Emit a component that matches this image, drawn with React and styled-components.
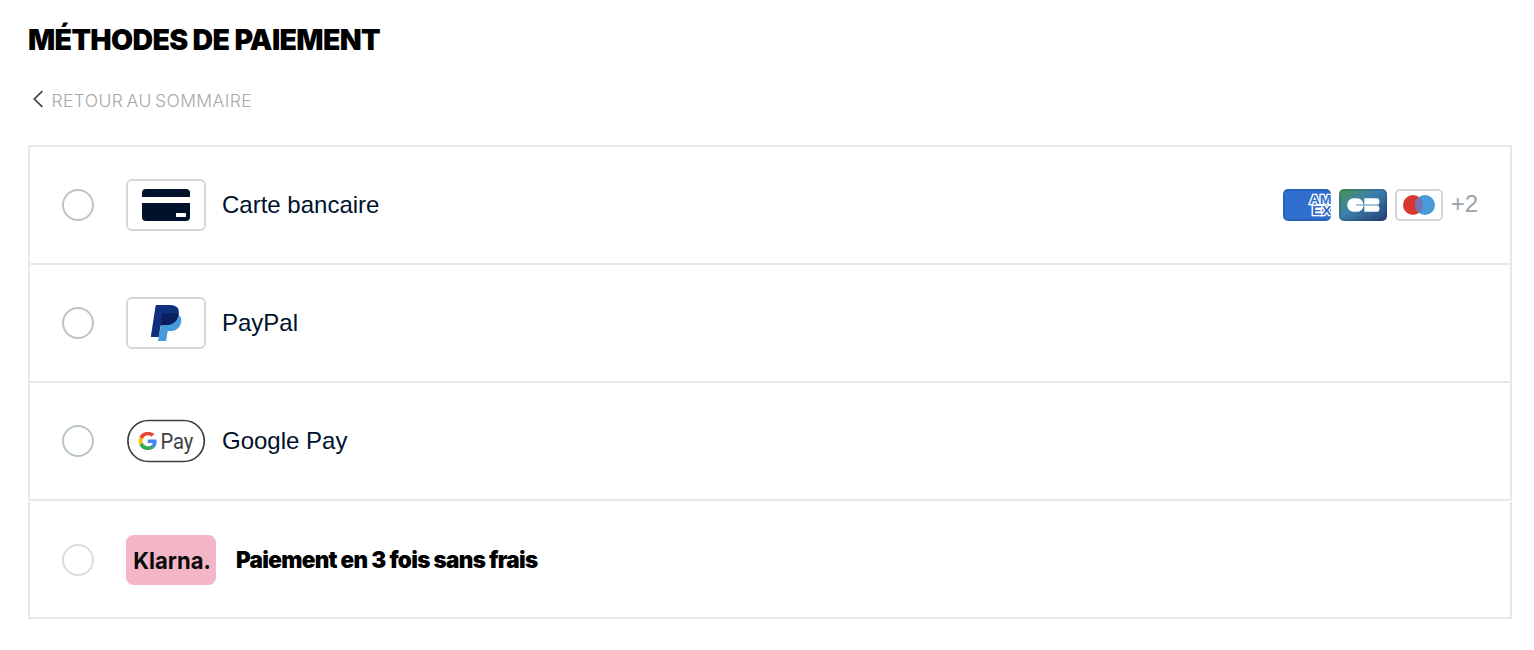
import React from "react";
import styled, { createGlobalStyle } from "styled-components";

const ink = "#00112c";
const line = "#e8e8e8";

const methods = [
  { id: "card", name: "Carte bancaire", logo: <CardLogo />, brands: true },
  { id: "paypal", name: "PayPal", logo: <PaypalLogo /> },
  { id: "gpay", name: "Google Pay", logo: <GooglePayLogo /> },
];

function CardLogo() {
  return (
    <LogoFrame>
      <svg width="48" height="32" viewBox="0 0 48 32">
        <path
          fill={ink}
          d="M4 0h40a4 4 0 0 1 4 4v4H0V4a4 4 0 0 1 4-4zM0 14h48v14a4 4 0 0 1-4 4H4a4 4 0 0 1-4-4z"
        />
        <rect x="34" y="24" width="10" height="4" rx="0.6" fill="#fff" />
      </svg>
    </LogoFrame>
  );
}

function PaypalLogo() {
  return (
    <LogoFrame>
      <svg width="32" height="36" viewBox="0 0 32 36">
        <path
          fill="#469bdb"
          d="M28.8 10c2.2 1.7 2.9 4.200 2.300 7.200C30 23 26.100 26 20.200 26h-2.500l-1.500 9.300c-.1.500-.4.700-.9.700H8l3-16z"
        />
        <path
          fill="#10307f"
          d="M6.900 0h13.400c6.300 0 9.600 3.500 8.300 9.600C27.300 16.200 23 20 16.500 20h-4.800c-.7 0-1.100.4-1.200 1L8.800 32H1.500c-.5 0-.7-.3-.6-.8L5.500 1.200C5.600.4 6.100 0 6.900 0z"
        />
        <path
          fill="#0b1f5f"
          d="M13.700 8.200h13c.8 0 1.500.3 2.100.8l-.2.6C27.300 16.200 23 20 16.500 20h-4.800c-.5 0-.9.200-1.100.6l1.700-11.100c.1-.8.6-1.300 1.400-1.300z"
        />
      </svg>
    </LogoFrame>
  );
}

function GooglePayLogo() {
  return (
    <svg width="80" height="44" viewBox="0 0 80 44">
      <rect x="1.900" y="1.500" width="76.400" height="41" rx="20.500" fill="#fff" stroke="#3c4043" strokeWidth="1.700" />
      <svg x="12.700" y="12.900" width="18.200" height="18.200" viewBox="3 3 42 42">
        <path fill="#ea4335" d="M24 11c3.300 0 6.200 1.200 8.500 3.400l6.500-6.500C35.100 4.700 30.100 3 24 3 15.400 3 8.400 7.500 4.900 14.300l7.600 5.900C14.200 14.700 18.700 11 24 11z" />
        <path fill="#4285f4" d="M44.500 24.500c0-1.400-.1-2.700-.4-4H24v8h11.600c-.5 2.700-2 4.500-4.300 6l7.200 5.800c4.100-3.700 6-9.300 6-15.800z" />
        <path fill="#fbbc04" d="M12.500 28.200a13 13 0 0 1 0-8l-7.600-5.900a21 21 0 0 0 0 19.400z" />
        <path fill="#34a853" d="M24 45c5.700 0 10.500-1.700 14.500-4.700L31.300 34.500c-1.900 1.300-4.300 2.100-7.300 2.100-5.400 0-9.900-3.500-11.500-8.400l-7.600 5.500C8.400 40.500 15.400 45 24 45z" />
      </svg>
      <LogoText x="34.400" y="29.500" textLength="33" lengthAdjust="spacingAndGlyphs" $size={21.5} $color="#3c4043" $family="Roboto">
        Pay
      </LogoText>
    </svg>
  );
}

function AmexLogo() {
  return (
    <svg width="48" height="32" viewBox="0 0 48 32">
      <defs>
        <clipPath id="amex">
          <rect width="48" height="32" rx="5" />
        </clipPath>
      </defs>
      <rect x="1" y="1" width="46" height="30" rx="4" fill="#306fce" stroke="#2963b9" strokeWidth="2" />
      <g clipPath="url(#amex)">
        <AmexText x="26.500" y="15.200" textLength="22" lengthAdjust="spacingAndGlyphs">
          AM
        </AmexText>
        <AmexText x="29" y="25.800" textLength="19.500" lengthAdjust="spacingAndGlyphs">
          EX
        </AmexText>
      </g>
    </svg>
  );
}

function CbLogo() {
  return (
    <svg width="48" height="32" viewBox="0 0 48 32">
      <defs>
        <linearGradient id="cb" x1="0" y1="0" x2="1" y2="1">
          <stop offset="0" stopColor="#4a9552" />
          <stop offset="0.45" stopColor="#3c7fae" />
          <stop offset="0.600" stopColor="#336f9f" />
          <stop offset="1" stopColor="#253c75" />
        </linearGradient>
      </defs>
      <rect width="48" height="32" rx="5" fill="url(#cb)" />
      <rect x="1" y="1" width="46" height="30" rx="4" fill="none" stroke="#123" strokeOpacity="0.150" strokeWidth="2" />
      <path
        fill="#fff"
        d="M15.500 9.200h2c4 0 6.600 2.400 7 6.400H17v.9h7.500c-.4 4-3 6.300-7 6.300h-2c-4.300 0-7.200-2.700-7.200-6.800s2.900-6.800 7.200-6.800zM25.300 9.200h12a3.200 3.200 0 0 1 0 6.400h-12zM25.300 16.500h12a3.150 3.150 0 0 1 0 6.300h-12z"
      />
      <rect x="17" y="15.600" width="23" height="0.900" fill="#b9cedf" />
    </svg>
  );
}

function MaestroLogo() {
  return (
    <svg width="48" height="32" viewBox="0 0 48 32">
      <rect x="1" y="1" width="46" height="30" rx="4" fill="#fff" stroke="#d3d8dd" strokeWidth="2" />
      <circle cx="18" cy="16" r="10" fill="#d93831" />
      <circle cx="30" cy="16" r="10" fill="#479bd6" />
      <path d="M24 8a10 10 0 0 1 0 16 10 10 0 0 1 0-16z" fill="#7773b3" />
    </svg>
  );
}

const App = () => {
  return (
    <Page>
      <GlobalStyle />
      <Title>MÉTHODES DE PAIEMENT</Title>
      <BackLink>
        <svg width="12" height="18" viewBox="0 0 12 18">
          <path d="M10.300 1.200 2.300 9l8 7.800" fill="none" stroke="#41414b" strokeWidth="1.700" />
        </svg>
        <span>RETOUR AU SOMMAIRE</span>
      </BackLink>
      <MethodList>
        {methods.map((item) => (
          <MethodRow key={item.id}>
            <Radio />
            <Logo>{item.logo}</Logo>
            <MethodName>{item.name}</MethodName>
            {item.brands && (
              <Brands>
                <AmexLogo />
                <CbLogo />
                <MaestroLogo />
                <MoreBrands>+2</MoreBrands>
              </Brands>
            )}
          </MethodRow>
        ))}
      </MethodList>
      <KlarnaRow>
        <Radio $color="#dcdcdc" />
        <KlarnaBadge width="90" height="50" viewBox="0 0 90 50">
          <rect width="90" height="50" rx="7.500" fill="#f4b5c7" />
          <LogoText x="7.300" y="34" textLength="77.500" lengthAdjust="spacingAndGlyphs" $size={23.5} $weight={650} $color="#0b0b0b">
            Klarna.
          </LogoText>
        </KlarnaBadge>
        <KlarnaName>Paiement en 3 fois sans frais</KlarnaName>
      </KlarnaRow>
    </Page>
  );
};

export default App;

const GlobalStyle = createGlobalStyle`
  * {
    box-sizing: border-box;
  }
  body {
    margin: 0;
    background: #fff;
  }
  svg {
    display: block;
    flex-shrink: 0;
  }
`;

const Page = styled.div`
  padding: 22px 22px 0 28px;
  font-family: Inter, sans-serif;
`;

const Title = styled.h1`
  margin: 0;
  font-size: 28.5px;
  line-height: 36px;
  font-weight: 900;
  letter-spacing: -0.65px;
  color: #000;
  white-space: nowrap;
`;

const BackLink = styled.a`
  display: flex;
  align-items: center;
  gap: 7.5px;
  height: 24px;
  margin-top: 30px;
  padding-left: 4px;
  font-size: 17.5px;
  font-weight: 300;
  letter-spacing: 0.4px;
  word-spacing: -2px;
  color: #a8a8a8;
  cursor: pointer;
  svg {
    margin-top: -3px;
  }
  span {
    line-height: 24px;
    padding-top: 1px;
  }
`;

const MethodList = styled.div`
  margin-top: 33px;
  border: 2px solid ${line};
  border-radius: 2px;
`;

const MethodRow = styled.div`
  display: flex;
  align-items: center;
  height: 116px;
  padding: 0 32px;
  & + & {
    height: 118px;
    border-top: 2px solid ${line};
  }
`;

const Radio = styled.span`
  width: 32px;
  height: 32px;
  flex-shrink: 0;
  border: 2px solid ${(props) => props.$color || "#b9c4c9"};
  border-radius: 50%;
`;

const Logo = styled.div`
  width: 80px;
  margin: 0 16px 0 32px;
`;

const LogoFrame = styled.div`
  display: flex;
  align-items: center;
  justify-content: center;
  width: 80px;
  height: 52px;
  border: 2px solid #d3d8dd;
  border-radius: 6px;
`;

const LogoText = styled.text`
  font-family: ${(props) => props.$family || "Inter"}, sans-serif;
  font-size: ${(props) => props.$size}px;
  font-weight: ${(props) => props.$weight || 400};
  fill: ${(props) => props.$color};
`;

const AmexText = styled.text`
  font-family: "Liberation Sans", sans-serif;
  font-size: 12px;
  font-weight: 700;
  fill: #306fce;
  stroke: #fff;
  stroke-width: 2.4px;
  paint-order: stroke;
`;

const MethodName = styled.span`
  font-family: "Liberation Sans", sans-serif;
  font-size: 24px;
  color: ${ink};
`;

const Brands = styled.div`
  display: flex;
  align-items: center;
  gap: 8px;
  margin-left: auto;
`;

const MoreBrands = styled.span`
  font-family: "Liberation Sans", sans-serif;
  font-size: 24px;
  line-height: 28px;
  margin-top: -3px;
  color: #99a3ad;
`;

const KlarnaRow = styled.div`
  display: flex;
  align-items: center;
  height: 117px;
  margin-top: 1px;
  padding: 0 32px;
  border: 2px solid ${line};
  border-top: 0;
`;

const KlarnaBadge = styled.svg`
  margin: 0 20px 0 32px;
`;

const KlarnaName = styled.span`
  font-size: 22.5px;
  font-weight: 900;
  letter-spacing: -0.7px;
  color: #000;
`;
